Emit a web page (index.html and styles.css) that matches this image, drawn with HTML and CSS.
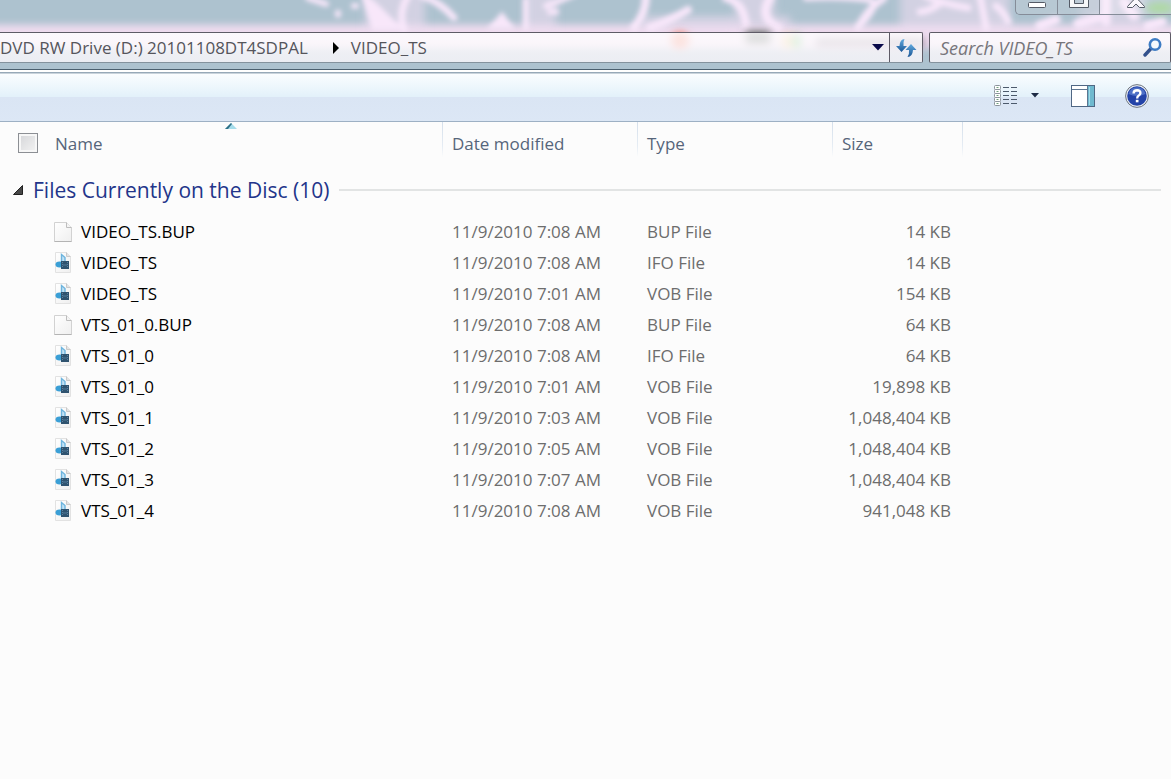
FILE: index.html
```html
<!DOCTYPE html>
<html lang="en">
<head>
    <meta charset="UTF-8">
    <meta name="viewport" content="width=device-width, initial-scale=1.0">
    <title>VIDEO_TS</title>
    <link rel="stylesheet" href="styles.css">
</head>
<body>
    <!-- shared icons -->
    <svg class="defs" width="0" height="0" aria-hidden="true">
        <defs>
            <linearGradient id="paper" x1="0" y1="0" x2="1" y2="1">
                <stop offset="0" stop-color="#fff"/>
                <stop offset="1" stop-color="#efefef"/>
            </linearGradient>
            <linearGradient id="blue" x1="0" y1="0" x2="0" y2="1">
                <stop offset="0" stop-color="#62a9de"/>
                <stop offset="1" stop-color="#1c5796"/>
            </linearGradient>
            <symbol id="icon-blank" viewBox="0 0 20 24">
                <path d="M1.5 2.5h12l5 5v14h-17z" fill="url(#paper)" stroke="#d2d2d2"/>
                <path d="M1.5 21.5h17" stroke="#b4b4b4"/>
                <path d="M13.500 2.500v5h5" fill="#f4f4f4" stroke="#bdbdbd"/>
            </symbol>
            <symbol id="icon-media" viewBox="0 0 20 24">
                <path d="M2.500 1.500h11l4 4v16h-15z" fill="url(#paper)" stroke="#e2e2e2"/>
                <path d="M13.500 1.500v4h4" fill="#e4e4e4" stroke="#cacaca"/>
                <path d="M8.500 12V3.500l3.500 3V11" fill="#c4e2f4" stroke="#6cb4de" stroke-width="1.400"/>
                <ellipse cx="6.500" cy="13.500" rx="4" ry="3" fill="#3a9fd6"/>
                <rect x="8" y="10" width="8" height="8" fill="#2f536f"/>
                <path d="M9.500 11v6M14.500 11v6" stroke="#5c83a0" stroke-dasharray="1 1"/>
                <path d="M10 14h4" stroke="#4f7898"/>
            </symbol>
        </defs>
    </svg>

    <div class="window">
        <header class="glass">
            <svg class="backdrop" viewBox="0 0 1171 70" preserveAspectRatio="none" aria-hidden="true">
                <defs>
                    <filter id="soft" x="-5%" y="-50%" width="110%" height="200%"><feGaussianBlur stdDeviation="2.600"/></filter>
                    <filter id="softer" x="-5%" y="-50%" width="110%" height="200%"><feGaussianBlur stdDeviation="4"/></filter>
                </defs>
                <rect width="1171" height="70" fill="#adc2cf"/>
                <rect x="-20" y="25" width="1211" height="24" fill="#efdcef" filter="url(#softer)"/>
                <g filter="url(#softer)" fill="#ecdcf0" opacity=".6">
                    <rect x="365" y="-10" width="60" height="44"/>
                    <rect x="526" y="-10" width="30" height="44"/>
                    <rect x="640" y="16" width="150" height="16"/>
                    <rect x="735" y="-10" width="40" height="44"/>
                    <rect x="900" y="-10" width="110" height="44"/>
                    <rect x="1080" y="-10" width="64" height="44"/>
                </g>
                <g filter="url(#soft)" stroke="#f8e7fa" fill="none" stroke-linecap="round">
                    <path d="M408 -4Q398 12 404 30M422 -4Q440 2 454 18" stroke-width="7"/>
                    <path d="M364 -4L374 28H398L376 6Z" fill="#f8e7fa" stroke-width="5"/>
                    <path d="M308 -2L326 4M338 13v2M354 6h2" stroke-width="6"/>
                    <path d="M490 28L502 14L512 28Z" fill="#f8e7fa" stroke-width="3"/>
                    <path d="M526 0V28M546 6Q562 0 574 -6M550 12h6" stroke-width="6"/>
                    <path d="M646 -4Q646 14 634 28M650 28Q672 20 688 10M726 -2Q744 2 746 26" stroke-width="8"/>
                    <path d="M770 -2Q758 18 778 28" stroke-width="9"/>
                    <path d="M806 -2Q842 -4 870 0Q880 4 862 24" stroke-width="6"/>
                    <path d="M884 -2Q866 10 858 28" stroke-width="7"/>
                    <path d="M926 -4Q944 4 968 8M942 2Q930 12 920 12M980 -4Q984 16 986 28M996 6Q1004 12 1008 22" stroke-width="7"/>
                    <path d="M1078 24L1098 18M1106 -2V22M1124 2L1134 16M1040 26L1056 20M1148 26L1162 22" stroke-width="10"/>
                </g>
                <g filter="url(#softer)">
                    <ellipse cx="1160" cy="8" rx="14" ry="6" fill="#9bd08e"/>
                    <ellipse cx="680" cy="41" rx="9" ry="9" fill="#f27f68"/>
                    <rect x="746" y="31" width="24" height="14" fill="#6b716e"/>
                    <ellipse cx="787" cy="42" rx="5" ry="8" fill="#f0c98c"/>
                    <ellipse cx="796" cy="42" rx="5" ry="8" fill="#6cc676"/>
                    <rect x="816" y="38" width="108" height="11" fill="#a596a9"/>
                </g>
            </svg>

            <div class="caption">
                <div class="caption-buttons">
                    <button type="button" class="cap minimize" aria-label="Minimize">
                        <svg width="20" height="10" viewBox="0 0 20 10"><rect x="1.500" y="2.500" width="17" height="5" rx="1" fill="#fff" stroke="#555b66"/></svg>
                    </button>
                    <button type="button" class="cap maximize" aria-label="Maximize">
                        <svg width="20" height="10" viewBox="0 0 20 10"><path d="M.5 -5.500h19v13h-19zM5.500 -1.500v5h9v-5z" fill="#f7f7f9" fill-rule="evenodd" stroke="#555b66"/></svg>
                    </button>
                    <button type="button" class="cap close" aria-label="Close">
                        <svg width="20" height="10" viewBox="0 0 20 10"><path d="M4.500 -2L7.500 0L1.500 6.500v1h5L10 4l3.500 3.500h5v-1L12.500 0L15.500 -2z" fill="#fbf8fc" stroke="#555b66"/></svg>
                    </button>
                </div>
            </div>

            <div class="nav">
                <div class="address">
                    <nav class="crumbs">
                        <a href="#">DVD RW Drive (D:) 20101108DT4SDPAL</a>
                        <svg width="7" height="12" viewBox="0 0 7 12" aria-hidden="true"><path d="M1 0L7 6L1 12z" fill="#000"/></svg>
                        <a href="#">VIDEO_TS</a>
                    </nav>
                    <button type="button" class="history" aria-label="Previous locations">
                        <svg width="12" height="7" viewBox="0 0 12 7"><path d="M0 0h12L6 6.500z" fill="#0a0a4a"/></svg>
                    </button>
                    <button type="button" class="refresh" aria-label="Refresh">
                        <svg width="22" height="20" viewBox="0 0 22 20">
                            <path d="M9.500 1Q5 1 4.500 8H1l5.500 6L12 8H8.500Q8 4 9.500 1z" fill="url(#blue)"/>
                            <path d="M12.500 19Q17.500 19 18 12h3.500L16 6l-5.500 6h3.500Q14.500 16 12.500 19z" fill="url(#blue)"/>
                        </svg>
                    </button>
                </div>
                <form class="search">
                    <input type="search" aria-label="Search VIDEO_TS" placeholder="Search VIDEO_TS">
                    <button type="submit" aria-label="Search">
                        <svg width="20" height="20" viewBox="0 0 20 20">
                            <path d="M2 17L8 10.500" stroke="#33518c" stroke-width="3.400" stroke-linecap="round"/>
                            <circle cx="12" cy="6.500" r="5.200" fill="#f6fafd" stroke="#3e7cc4" stroke-width="2.600"/>
                        </svg>
                    </button>
                </form>
            </div>
        </header>

        <div class="toolbar">
            <button type="button" aria-label="Change your view">
                <svg width="24" height="22" viewBox="0 0 24 22">
                    <g fill="#fff" stroke="#8a939b">
                        <rect x=".5" y=".5" width="6" height="4" rx="1"/>
                        <rect x=".5" y="4.500" width="6" height="4" rx="1"/>
                        <rect x=".5" y="8.500" width="6" height="4" rx="1"/>
                        <rect x=".5" y="12.500" width="6" height="4" rx="1"/>
                        <rect x=".5" y="16.500" width="6" height="4" rx="1"/>
                    </g>
                    <path d="M2.500 2.500h2M2.500 6.500h2M2.500 10.500h2M2.500 14.500h2M2.500 18.500h2" stroke="#6fa07a"/>
                    <path d="M9 2.500h6M17 2.500h6M9 6.500h6M17 6.500h6M9 10.500h6M17 10.500h6M9 14.500h6M17 14.500h6M9 18.500h6M17 18.500h6" stroke="#4c5a6c"/>
                </svg>
            </button>
            <button type="button" class="more" aria-label="More options">
                <svg width="8" height="5" viewBox="0 0 8 5"><path d="M0 0h8L4 4.500z" fill="#1e2b45"/></svg>
            </button>
            <button type="button" class="preview" aria-label="Show the preview pane">
                <svg width="24" height="22" viewBox="0 0 24 22">
                    <rect x=".5" y=".5" width="23" height="21" fill="#fff" stroke="#4f6784"/>
                    <rect x="17" y="1" width="6" height="20" fill="#6fb9cf"/>
                    <path d="M18.500 2v18" stroke="#a4dbe8"/>
                    <path d="M1 4.500h15M16.500 1v20" stroke="#5d7691"/>
                </svg>
            </button>
            <button type="button" class="help" aria-label="Get help">
                <svg width="24" height="24" viewBox="0 0 24 24">
                    <circle cx="12" cy="12" r="11.400" fill="#e9edf3" stroke="#6d7580"/>
                    <circle cx="12" cy="12" r="9.800" fill="#2343a8"/>
                    <path d="M3.500 10a8.700 8.700 0 0 1 17 0Q12 14 3.500 10z" fill="#5f83d4" opacity=".7"/>
                    <path d="M8.600 9.500Q8.600 6.300 12.200 6.300Q15.600 6.400 15.400 9.200Q15.300 10.800 13.500 11.800Q12.200 12.500 12.200 14.400" fill="none" stroke="#fff" stroke-width="2.400"/>
                    <rect x="10.800" y="15.800" width="2.700" height="2.500" fill="#fff"/>
                </svg>
            </button>
        </div>

        <table class="files">
            <colgroup>
                <col class="col-name">
                <col class="col-date">
                <col class="col-type">
                <col class="col-size">
                <col>
            </colgroup>
            <thead>
                <tr>
                    <th>
                        <div class="name-head">
                            <input type="checkbox" id="select-all" aria-label="Select all">
                            <span>Name</span>
                        </div>
                        <svg class="sort" width="12" height="6" viewBox="0 0 12 6" aria-hidden="true"><path d="M0 6L6 0L12 6z" fill="#a5dcea"/><path d="M0 6L6 0L7 1L3 6z" fill="#2f6f86"/></svg>
                    </th>
                    <th>Date modified</th>
                    <th>Type</th>
                    <th>Size</th>
                    <th></th>
                </tr>
            </thead>
            <tbody>
                <tr class="group">
                    <td colspan="5">
                        <div class="group-head">
                            <svg width="10" height="10" viewBox="0 0 10 10" aria-hidden="true"><path d="M.5 9.500H9.500V.5z" fill="#484848" stroke="#222"/></svg>
                            <h2>Files Currently on the Disc (10)</h2>
                            <span class="rule"></span>
                        </div>
                    </td>
                </tr>
                <tr><td><div class="file"><svg><use href="#icon-blank"/></svg>VIDEO_TS.BUP</div></td><td>11/9/2010 7:08 AM</td><td>BUP File</td><td>14 KB</td><td></td></tr>
                <tr><td><div class="file"><svg><use href="#icon-media"/></svg>VIDEO_TS</div></td><td>11/9/2010 7:08 AM</td><td>IFO File</td><td>14 KB</td><td></td></tr>
                <tr><td><div class="file"><svg><use href="#icon-media"/></svg>VIDEO_TS</div></td><td>11/9/2010 7:01 AM</td><td>VOB File</td><td>154 KB</td><td></td></tr>
                <tr><td><div class="file"><svg><use href="#icon-blank"/></svg>VTS_01_0.BUP</div></td><td>11/9/2010 7:08 AM</td><td>BUP File</td><td>64 KB</td><td></td></tr>
                <tr><td><div class="file"><svg><use href="#icon-media"/></svg>VTS_01_0</div></td><td>11/9/2010 7:08 AM</td><td>IFO File</td><td>64 KB</td><td></td></tr>
                <tr><td><div class="file"><svg><use href="#icon-media"/></svg>VTS_01_0</div></td><td>11/9/2010 7:01 AM</td><td>VOB File</td><td>19,898 KB</td><td></td></tr>
                <tr><td><div class="file"><svg><use href="#icon-media"/></svg>VTS_01_1</div></td><td>11/9/2010 7:03 AM</td><td>VOB File</td><td>1,048,404 KB</td><td></td></tr>
                <tr><td><div class="file"><svg><use href="#icon-media"/></svg>VTS_01_2</div></td><td>11/9/2010 7:05 AM</td><td>VOB File</td><td>1,048,404 KB</td><td></td></tr>
                <tr><td><div class="file"><svg><use href="#icon-media"/></svg>VTS_01_3</div></td><td>11/9/2010 7:07 AM</td><td>VOB File</td><td>1,048,404 KB</td><td></td></tr>
                <tr><td><div class="file"><svg><use href="#icon-media"/></svg>VTS_01_4</div></td><td>11/9/2010 7:08 AM</td><td>VOB File</td><td>941,048 KB</td><td></td></tr>
            </tbody>
        </table>
    </div>
</body>
</html>
```
FILE: styles.css
```css
* {
    box-sizing: border-box;
}

body {
    margin: 0;
    background-color: #fcfcfc;
    font-family: "Open Sans", "Noto Sans", sans-serif;
    font-size: 17px;
    color: #6d6d6d;
}

button {
    display: flex;
    align-items: center;
    justify-content: center;
    padding: 0;
    border: none;
    background: none;
    cursor: pointer;
}

svg {
    display: block;
    flex: none;
}

.defs {
    position: absolute;
}

.window {
    min-height: 100vh;
}

/* title bar and address bar */
.glass {
    position: relative;
    padding-bottom: 6px;
    border-bottom: 1px solid #4b5f6e;
    overflow: hidden;
}

.backdrop {
    position: absolute;
    inset: 0;
    width: 100%;
    height: 100%;
}

.caption {
    position: relative;
    display: flex;
    justify-content: flex-end;
    height: 32px;
}

.caption-buttons {
    display: flex;
    height: 15px;
    border: 1px solid #858c98;
    border-width: 0 0 1px 1px;
    border-bottom-left-radius: 5px;
    overflow: hidden;
}

.cap {
    align-items: flex-start;
    width: 42px;
    background-color: rgba(190, 203, 214, 0.6);
    border-right: 1px solid #858c98;
}

.cap.close {
    width: 71px;
    background-color: rgba(255, 255, 255, 0.2);
    border-right: none;
}

.nav {
    position: relative;
    display: flex;
    gap: 6px;
    height: 31px;
}

.address, .search {
    display: flex;
    border: 1px solid #5e5b66;
    border-bottom-color: #84929d;
    border-radius: 2px;
    background: linear-gradient(rgba(255, 255, 255, 0.8), rgba(252, 248, 252, 0.8));
}

.address {
    flex: 1;
    border-left: none;
    border-radius: 0 2px 2px 0;
}

.crumbs {
    flex: 1;
    display: flex;
    align-items: center;
}

.crumbs a {
    color: #55555c;
    text-decoration: none;
    white-space: nowrap;
}

.crumbs svg {
    margin: 0 12px 0 24px;
}

.history {
    width: 22px;
}

.refresh {
    width: 33px;
    border-left: 1px solid #5e5b66;
}

.search {
    width: 242px;
}

.search input {
    flex: 1;
    min-width: 0;
    padding: 0 0 0 10px;
    border: none;
    outline: none;
    background: none;
    font: italic 18px "Open Sans", "Noto Sans", sans-serif;
    color: #333;
}

.search input::placeholder {
    color: #77757b;
    opacity: 1;
}

.search button {
    width: 34px;
}

/* command bar */
.toolbar {
    display: flex;
    align-items: center;
    justify-content: flex-end;
    height: 52px;
    padding: 0 22px 2px 0;
    border-top: 2px solid #fff;
    border-bottom: 1px solid #9db0c4;
    background: linear-gradient(#97a9b8 1px, #fafdff 2px, #e3f1fa 50%, #dae5f4 51%, #dce7f5);
}

.more {
    margin-left: 13px;
}

.preview {
    margin-left: 32px;
}

.help {
    margin-left: 30px;
}

/* file list */
.files {
    width: 100%;
    table-layout: fixed;
    border-collapse: collapse;
}

.col-name {
    width: 443px;
}

.col-date, .col-type {
    width: 195px;
}

.col-size {
    width: 130px;
}

th, td {
    padding: 0 0 0 9px;
    text-align: left;
    white-space: nowrap;
}

th {
    position: relative;
    height: 42px;
    font-weight: normal;
    color: #56657a;
    background: linear-gradient(#d5dfeb, #e6edf4 70%, #fcfcfc) right top / 1px 35px no-repeat;
}

th:last-child {
    background: none;
}

.name-head {
    display: flex;
    align-items: center;
    gap: 17px;
    padding-left: 9px;
}

#select-all {
    appearance: none;
    width: 20px;
    height: 20px;
    margin: 0;
    border: 1px solid #8c8f94;
    background: linear-gradient(135deg, #d4d5d8, #f4f4f4);
    box-shadow: inset 0 0 0 2px #f7f7f7;
}

.sort {
    position: absolute;
    top: 1px;
    left: 225px;
}

td {
    height: 31px;
}

td:nth-child(4) {
    padding: 0 12px 0 0;
    text-align: right;
}

.group td {
    height: 52px;
    padding: 0 10px 0 13px;
}

.group-head {
    display: flex;
    align-items: center;
    gap: 10px;
}

.group-head h2 {
    margin: 0;
    font-size: 21px;
    font-weight: normal;
    color: #23358a;
}

.rule {
    flex: 1;
    height: 2px;
    background-color: #e2e4e4;
}

.file {
    display: flex;
    align-items: center;
    gap: 8px;
    padding-left: 44px;
    color: #000;
}

.file svg {
    width: 20px;
    height: 24px;
}
```
